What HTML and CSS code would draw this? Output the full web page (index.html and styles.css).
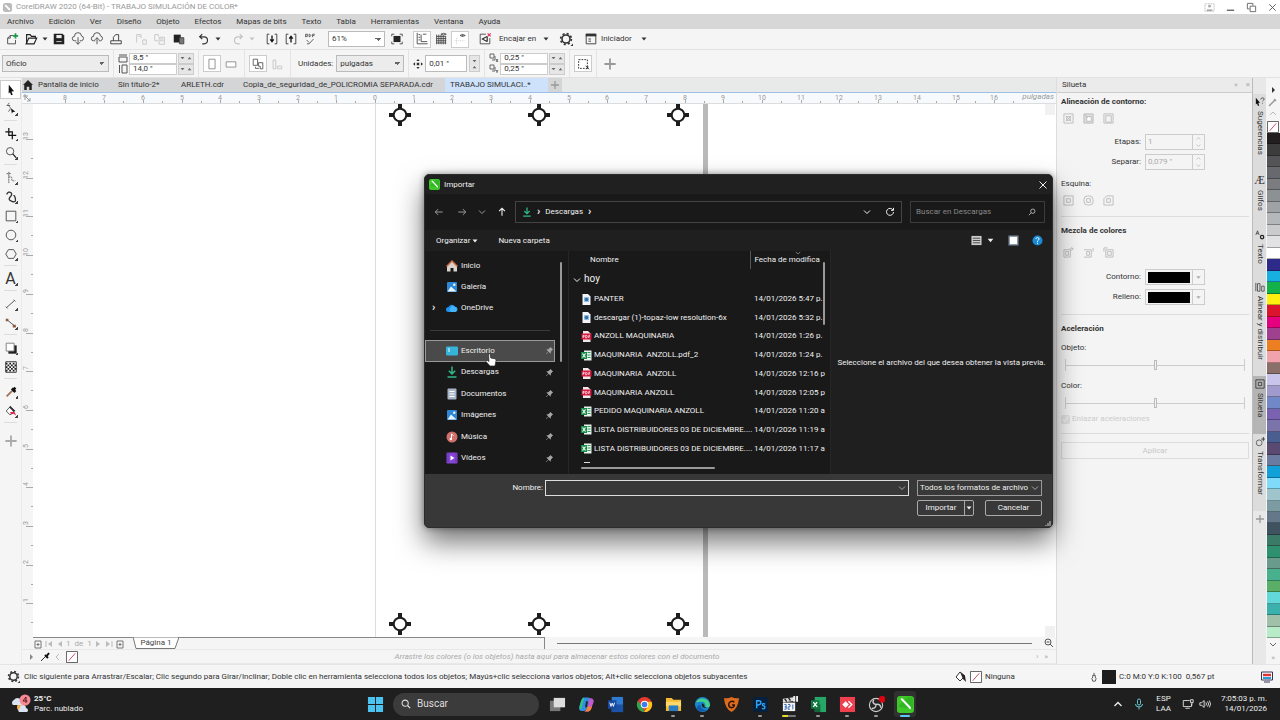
FILE: index.html
```
<!DOCTYPE html>
<html lang="es">
<head>
  <meta charset="UTF-8" />
  <title>CorelDRAW 2020 (64-Bit) - TRABAJO SIMULACIÓN DE COLOR*</title>
  <link rel="stylesheet" href="styles.css">
</head>
<body>
  <!-- shared icons -->
  <svg class="sprite" aria-hidden="true">
    <symbol id="i-caret" viewBox="0 0 8 8"><path d="M1.5 2.5h5L4 5.5z" fill="currentColor"/></symbol>
    <symbol id="i-chev" viewBox="0 0 8 8"><path d="M1 2.5l3 3 3-3" fill="none" stroke="currentColor"/></symbol>
    <symbol id="i-plus" viewBox="0 0 10 10"><path d="M5 1v8M1 5h8" fill="none" stroke="currentColor" stroke-width="1.3"/></symbol>
    <symbol id="i-gear" viewBox="0 0 14 14"><circle cx="7" cy="7" r="4" fill="none" stroke="currentColor" stroke-width="1.6"/><circle cx="7" cy="7" r="5.4" fill="none" stroke="currentColor" stroke-width="1.6" stroke-dasharray="2.1 2.14"/><path d="M14 14v-2.5L11.500 14z" fill="currentColor"/></symbol>
    <symbol id="i-none" viewBox="0 0 13 13"><path d="M.5.5h12v12H.5z" fill="#fff" stroke="#555"/><path d="M3 10.500l7-8" stroke="#c0405a"/></symbol>
    <symbol id="i-pin" viewBox="0 0 10 10"><path d="M6 1l3 3-1 .5L6.500 6.500 6.200 8.500 4 6.300 1.500 9 1 8.500 3.700 6 1.500 3.800l2-.3L5.500 2z" fill="#a5a5a5"/></symbol>
    <symbol id="i-pdf" viewBox="0 0 11 11"><path d="M2 0h5l2.500 2.500V11H2z" fill="#f3e6e8"/><path d="M.5 2.500h10v6H.5z" fill="#d3163c"/><path d="M2 7V4.300h1.200v1.400H2M4.700 7V4.300q1.700 0 1.700 1.300T4.700 7M7.800 7V4.300H9M7.800 5.700h1" fill="none" stroke="#fff" stroke-width=".7"/></symbol>
    <symbol id="i-xls" viewBox="0 0 11 11"><path d="M3 .5h7.500v10H3z" fill="#e8f1ea"/><path d="M6.500 2.500h3M6.500 5h3M6.500 7.500h3" stroke="#2c9c5a" stroke-width="1.200"/><path d="M0 2h6v7H0z" fill="#168a48"/><path d="M1.500 3.500l3 4M4.500 3.500l-3 4" stroke="#fff" stroke-width="1.100"/></symbol>
    <symbol id="i-img" viewBox="0 0 11 11"><path d="M1.500 0H7l2.500 2.500V11h-8z" fill="#f1f4f8"/><path d="M3 3h5v5H3z" fill="#9bc0e4"/><circle cx="5.500" cy="5.500" r="1.800" fill="#2f6faf"/></symbol>
    <symbol id="i-down" viewBox="0 0 12 12"><path d="M6 .5v7M2.800 4.800L6 8l3.200-3.200M1.500 11h9" fill="none" stroke="#2fb885" stroke-width="1.500"/></symbol>
    <symbol id="i-picture" viewBox="0 0 12 12"><rect x="1" y="1" width="10" height="10" rx="1" fill="#2d86d6"/><path d="M1.500 10.500l3.500-5 5.500 5z" fill="#e6f4ff"/><circle cx="8.300" cy="3.700" r="1.200" fill="#fff"/></symbol>
    <symbol id="i-corel" viewBox="0 0 16 16"><rect width="16" height="16" rx="3" fill="#3fc628"/><path d="M1 10L10 1h3a2 2 0 0 1 2 2v9z" fill="#1fa51b" opacity=".5"/><path d="M3.500 3.200l8.500 9 1 .2v-2L5 2.200q-1.500 0-1.500 1z" fill="#fff"/></symbol>
    <symbol id="i-shape" viewBox="0 0 12 12"><path d="M1 1h10v10H1zM4 4h4v4H4z" fill="none" stroke="currentColor"/></symbol>
  </svg>

  <header class="titlebar">
    <svg class="app-logo" viewBox="0 0 12 12"><rect x="1" y="1" width="10" height="10" rx="3" fill="#bbb"/><path d="M3.500 3.500l5 5" stroke="#fff" stroke-width="2"/></svg>
    <span class="app-title">CorelDRAW 2020 (64-Bit) - TRABAJO SIMULACIÓN DE COLOR*</span>
    <div class="window-buttons">
      <button aria-label="Cuenta"><svg viewBox="0 0 12 12"><path d="M1 2h10v8H1z" fill="none" stroke="#bbb" stroke-dasharray="2 1"/><circle cx="6" cy="4.500" r="1.500" fill="#aaa"/><path d="M3 9h6" stroke="#aaa" stroke-width="2"/></svg></button>
      <button aria-label="Minimizar"><svg viewBox="0 0 12 12"><path d="M2 9h8" stroke="#666" stroke-width="1.500"/></svg></button>
      <button aria-label="Restaurar"><svg viewBox="0 0 12 12"><path d="M4.500 4.500h6v6h-6zM4 7.500H1.500v-6h6V4" fill="none" stroke="#666"/></svg></button>
      <button aria-label="Cerrar"><svg viewBox="0 0 12 12"><path d="M2.500 2.500l7 7M9.500 2.500l-7 7" stroke="#555"/></svg></button>
    </div>
  </header>

  <nav class="menubar">
    <button>Archivo</button><button>Edición</button><button>Ver</button><button>Diseño</button><button>Objeto</button><button>Efectos</button><button>Mapas de bits</button><button>Texto</button><button>Tabla</button><button>Herramientas</button><button>Ventana</button><button>Ayuda</button>
  </nav>

  <div class="toolbar">
    <button class="tool" aria-label="Nuevo"><svg viewBox="0 0 16 16"><path d="M9 4H6L3 7v6.500h9V9M6 4v3H3" fill="none" stroke="#444"/><path d="M12 1.500v6M9 4.500h6" stroke="#1c9a4c" stroke-width="2"/></svg></button>
    <button class="tool" aria-label="Abrir"><svg viewBox="0 0 16 16"><path d="M3 13V3h4l1.500 2H13v2" fill="none" stroke="#222" stroke-width="1.300"/><path d="M2.500 13.500L5.500 7h9l-3 6.500z" fill="none" stroke="#222" stroke-width="1.300"/></svg></button>
    <button class="tool-caret" aria-label="Recientes"><svg><use href="#i-caret"/></svg></button>
    <button class="tool" aria-label="Guardar"><svg viewBox="0 0 16 16"><path d="M2 2h10l2 2v10H2z" fill="#222"/><path d="M5 3.500h6v3.500H5z" fill="#eee"/><path d="M5 10.500h6v1H5z" fill="#ddd"/></svg></button>
    <button class="tool" aria-label="Abrir de la nube"><svg viewBox="0 0 16 16"><path d="M6 10H4a2.500 2.500 0 0 1 0-5 4 4 0 0 1 8-.5A2.800 2.800 0 0 1 12 10h-2M8 6v8M5.500 11.500L8 14l2.500-2.500" fill="none" stroke="#444"/></svg></button>
    <button class="tool" aria-label="Guardar en la nube"><svg viewBox="0 0 16 16"><path d="M6 10H4a2.500 2.500 0 0 1 0-5 4 4 0 0 1 8-.5A2.800 2.800 0 0 1 12 10h-2M8 14V6.500M5.500 9L8 6.500 10.500 9" fill="none" stroke="#444"/></svg></button>
    <button class="tool" aria-label="Imprimir"><svg viewBox="0 0 16 16"><path d="M5 10V6l2.500-3H11v7M2 10h12v3.500H2z" fill="none" stroke="#333"/></svg></button>
    <span class="sep"></span>
    <button class="tool dim" aria-label="Cortar"><svg viewBox="0 0 16 16"><path d="M3 12V3h5v4M5 5h2M10 9h4v5h-4z" fill="none" stroke="currentColor"/></svg></button>
    <button class="tool dim" aria-label="Copiar"><svg viewBox="0 0 16 16"><path d="M6 5V3H2v7h4M7 6h6v8H7zM8 8h4M8 10h4" fill="none" stroke="currentColor"/></svg></button>
    <button class="tool" aria-label="Pegar"><svg viewBox="0 0 16 16"><path d="M2 3h8v9H2z" fill="#222"/><path d="M8.500 6.500h5v7h-5z" fill="#777" stroke="#444"/></svg></button>
    <span class="sep"></span>
    <button class="tool" aria-label="Deshacer"><svg viewBox="0 0 16 16"><path d="M6 2.500L3 5.500l3 2.500M3.500 5.500H8a4 4 0 0 1 0 8H6" fill="none" stroke="#333" stroke-width="1.300"/></svg></button>
    <button class="tool-caret" aria-label="Lista deshacer"><svg><use href="#i-caret"/></svg></button>
    <span class="sep"></span>
    <button class="tool dim" aria-label="Rehacer"><svg viewBox="0 0 16 16"><path d="M10 2.500l3 3L10 8M12.500 5.500H8a4 4 0 0 0 0 8h2" fill="none" stroke="currentColor" stroke-width="1.300"/></svg></button>
    <button class="tool-caret dim" aria-label="Lista rehacer"><svg><use href="#i-caret"/></svg></button>
    <span class="sep"></span>
    <button class="tool" aria-label="Importar archivo"><svg viewBox="0 0 16 16"><path d="M5 2.500H2.500v11H5M11 2.500h2.500v11H11" fill="none" stroke="#333"/><path d="M8 4v7M6 8.500L8 11l2-2.500" fill="none" stroke="#111" stroke-width="1.500"/></svg></button>
    <button class="tool" aria-label="Exportar"><svg viewBox="0 0 16 16"><path d="M5 2.500H2.500v11H5M11 2.500h2.500v11H11" fill="none" stroke="#333"/><path d="M8 12V5M6 7.500L8 5l2 2.500" fill="none" stroke="#111" stroke-width="1.500"/></svg></button>
    <button class="tool" aria-label="Publicar en PDF"><svg viewBox="0 0 16 16"><path d="M3 6V2.500h2V5H3M7 2.500v3q2-.5 2-1.500T7 2.500M11 6V2.500h2.500M11 4h2M4 9l3 3M12 8l-5 5.500H4.500" fill="none" stroke="#555"/></svg></button>
    <span class="sep"></span>
    <select class="zoom" aria-label="Nivel de zoom"><option>61%</option></select>
    <button class="tool" aria-label="Pantalla completa"><svg viewBox="0 0 16 16"><path d="M4 4.500h8v7H4z" fill="#222"/><path d="M2 5V2.500h3M11 2.500h3V5M14 11v2.500h-3M5 13.500H2V11" fill="none" stroke="#444"/></svg></button>
    <span class="sep"></span>
    <button class="tool pressed" aria-label="Reglas"><svg viewBox="0 0 16 16"><path d="M2.500 1v12.500h12M7 3v8h7M4 3h2M4 6h2M4 9h2M9 2.500h4" fill="none" stroke="#444"/></svg></button>
    <button class="tool" aria-label="Cuadrícula"><svg viewBox="0 0 16 16"><path d="M3 3v11M5.500 3v11M8 3v11M10.500 4v10M13 5v9M2.500 5H14M2.500 7.500H14M2.500 10H14M2.500 12.500H14" stroke="#444"/><path d="M8 2.500q3-2 6 0-3 2-6 0" fill="#fff" stroke="#444"/></svg></button>
    <button class="tool pressed" aria-label="Guías"><svg viewBox="0 0 16 16"><path d="M2 10h12M4 14V6" stroke="#ccc" stroke-dasharray="1 1"/><path d="M8 4q3-2.500 6 0-3 2-6 0M11 3v2" fill="none" stroke="#444"/></svg></button>
    <span class="sep"></span>
    <button class="tool" aria-label="Sin encaje"><svg viewBox="0 0 16 16"><path d="M9 2.500H2.500v11h11V7" fill="none" stroke="#444"/><path d="M10.500 5v6M10.500 5L5 8l5.500 3" fill="none" stroke="#222" stroke-width="1.300"/><path d="M11 1.500l3.500 3.500M14.500 1.500L11 5" stroke="#d8365a" stroke-width="1.300"/></svg></button>
    <button class="text-tool snap">Encajar en</button>
    <button class="tool-caret" aria-label="Opciones de encaje"><svg><use href="#i-caret"/></svg></button>
    <span class="sep"></span>
    <button class="tool" aria-label="Opciones"><svg><use href="#i-gear"/></svg></button>
    <span class="sep"></span>
    <button class="tool" aria-label="Iniciador de aplicaciones"><svg viewBox="0 0 16 16"><path d="M2.500 2.500h11v11h-11z" fill="none" stroke="#333"/><path d="M2 2h12v3H2z" fill="#333"/><path d="M5 8h3M5 10.500h3" stroke="#333"/></svg></button>
    <button class="text-tool launcher">Iniciador</button>
    <button class="tool-caret" aria-label="Más aplicaciones"><svg><use href="#i-caret"/></svg></button>
  </div>

  <div class="toolbar property-bar">
    <select class="paper" aria-label="Tamaño de página"><option>Oficio</option></select>
    <span class="sep line"></span>
    <div class="pair">
      <label class="field"><svg viewBox="0 0 10 10"><path d="M1 4h8v5H1zM1 2h8" fill="none" stroke="#555"/></svg><input value="8,5 &quot;" aria-label="Ancho"><i class="spin"><svg><use href="#i-caret"/></svg><svg><use href="#i-caret"/></svg></i></label>
      <label class="field"><svg viewBox="0 0 10 10"><path d="M4 1h5v8H4zM1.500 1v8" fill="none" stroke="#555"/></svg><input value="14,0 &quot;" aria-label="Alto"><i class="spin"><svg><use href="#i-caret"/></svg><svg><use href="#i-caret"/></svg></i></label>
    </div>
    <span class="sep line"></span>
    <button class="tool pressed" aria-label="Vertical"><svg viewBox="0 0 16 16"><path d="M4.500 2.500h7v11h-7z" fill="#fff" stroke="#888"/></svg></button>
    <button class="tool" aria-label="Horizontal"><svg viewBox="0 0 16 16"><path d="M2.500 5.500h11v6h-11z" fill="#fff" stroke="#888"/></svg></button>
    <span class="sep line"></span>
    <button class="tool pressed" aria-label="Todas las páginas"><svg viewBox="0 0 16 16"><path d="M2.500 2.500h5v7h-5zM5 11v2h4M8.500 6.500h5v7h-3v-3h-2z" fill="none" stroke="#555"/></svg></button>
    <button class="tool dim" aria-label="Página actual"><svg viewBox="0 0 16 16"><path d="M3.500 3.500h3v10h-3zM8.500 10.500h5v3h-5z" fill="none" stroke="currentColor"/></svg></button>
    <span class="sep line"></span>
    <label class="field units">Unidades: <select><option>pulgadas</option></select></label>
    <span class="sep line"></span>
    <label class="field nudge"><svg viewBox="0 0 12 12"><path d="M6 0l2 2.500H4zM6 12l2-2.500H4zM0 6l2.500-2v4zM12 6L9.500 4v4zM4.500 4.500h3v3h-3z" fill="#333"/></svg><input value="0,01 &quot;" aria-label="Distancia de precisión"><i class="spin tall"><svg><use href="#i-caret"/></svg><svg><use href="#i-caret"/></svg></i></label>
    <span class="sep line"></span>
    <div class="pair">
      <label class="field"><svg viewBox="0 0 10 10"><path d="M1 1h4v4H1zM3 7h3V3M7 6l2 3M9 6L7 9" fill="none" stroke="#666"/></svg><input value="0,25 &quot;" aria-label="Duplicado X"><i class="spin"><svg><use href="#i-caret"/></svg><svg><use href="#i-caret"/></svg></i></label>
      <label class="field"><svg viewBox="0 0 10 10"><path d="M1 1h4v4H1zM3 7h3V3M7 6l1 1.500L9 6M8 7v2" fill="none" stroke="#666"/></svg><input value="0,25 &quot;" aria-label="Duplicado Y"><i class="spin"><svg><use href="#i-caret"/></svg><svg><use href="#i-caret"/></svg></i></label>
    </div>
    <span class="sep line"></span>
    <button class="tool pressed" aria-label="Tratar como relleno"><svg viewBox="0 0 16 16"><path d="M3 3h10v10H3z" fill="none" stroke="#222" stroke-dasharray="2 1.300"/><path d="M11 10l4 4M12 14l2-3" stroke="#222"/></svg></button>
    <span class="sep line"></span>
    <button class="tool dim add" aria-label="Personalizar"><svg><use href="#i-plus"/></svg></button>
  </div>

  <main class="workspace">
    <div class="toolbox">
      <button class="pick active" aria-label="Selección"><svg viewBox="0 0 16 16"><path d="M5.500 2l6 7.500-3 .3 1.500 3.500-1.800.7-1.400-3.500-1.500 1.500z" fill="#111"/></svg></button>
      <button class="flyout" aria-label="Forma"><svg viewBox="0 0 16 16"><path d="M6 1q-3 2 0 4t-1 6" fill="none" stroke="#555"/><path d="M8 7l5 4-3 .5-1 2z" fill="#111"/><path d="M3 4h4" stroke="#555"/></svg></button>
      <hr>
      <button class="flyout" aria-label="Recortar"><svg viewBox="0 0 16 16"><path d="M5.500 1v8.500H14M1.500 5.500h8V14" fill="none" stroke="#111" stroke-width="1.400"/></svg></button>
      <button class="flyout" aria-label="Zoom"><svg viewBox="0 0 16 16"><circle cx="7" cy="6" r="4.200" fill="none" stroke="#444"/><path d="M10 9l4 4.500" stroke="#222" stroke-width="1.500"/></svg></button>
      <hr>
      <button class="flyout" aria-label="Mano alzada"><svg viewBox="0 0 16 16"><path d="M3 3h5M5.500 1v13M5 7q5-1 4 2t4 2" fill="none" stroke="#555" stroke-dasharray="2 .7"/></svg></button>
      <button class="flyout" aria-label="Medios artísticos"><svg viewBox="0 0 16 16"><path d="M3 5q2-4 5-2 2 2-1 5t2 5 4-3-2-3" fill="none" stroke="#333" stroke-width="1.500"/></svg></button>
      <button class="flyout" aria-label="Rectángulo"><svg viewBox="0 0 16 16"><path d="M2.500 2.500h11v11h-11z" fill="none" stroke="#444"/></svg></button>
      <button class="flyout" aria-label="Elipse"><svg viewBox="0 0 16 16"><circle cx="8" cy="8" r="5.500" fill="none" stroke="#444"/></svg></button>
      <button class="flyout" aria-label="Polígono"><svg viewBox="0 0 16 16"><path d="M5 3h6l3 5-3 5H5L2 8z" fill="none" stroke="#444"/></svg></button>
      <hr>
      <button aria-label="Texto" class="letter flyout">A</button>
      <hr>
      <button class="flyout" aria-label="Cota paralela"><svg viewBox="0 0 16 16"><path d="M3 12l9-8M2 11l2 2M11 3l2 2" stroke="#444"/></svg></button>
      <button class="flyout" aria-label="Conector"><svg viewBox="0 0 16 16"><path d="M3 4l10 8" stroke="#444"/><path d="M2 3h3v3H2zM10 10h3.500v3H10z" fill="#8d5b3e"/></svg></button>
      <hr>
      <button class="flyout" aria-label="Sombra"><svg viewBox="0 0 16 16"><path d="M5 5h9.500v9.500H5z" fill="#222"/><path d="M2.500 2.500h9v9h-9z" fill="#fff" stroke="#777"/></svg></button>
      <button aria-label="Transparencia"><svg viewBox="0 0 16 16"><path d="M2 2h12v12H2z" fill="#fff" stroke="#222"/><path d="M2 4h12M2 8h12M2 12h12" stroke="#222" stroke-width="2" stroke-dasharray="2 2"/><path d="M4 6h10M4 10h10" stroke="#222" stroke-width="2" stroke-dasharray="2 2"/></svg></button>
      <hr>
      <button class="flyout" aria-label="Cuentagotas"><svg viewBox="0 0 16 16"><path d="M3 13l6-6" stroke="#a07050" stroke-width="2"/><path d="M9 4l4 4M9.500 7L13 3" stroke="#111" stroke-width="3"/></svg></button>
      <button class="flyout" aria-label="Relleno interactivo"><svg viewBox="0 0 16 16"><path d="M7 3L2.500 8l4.500 4.500 5-5z" fill="#fff" stroke="#444"/><path d="M7 2l6 6-2 1-5-5z" fill="#333"/><path d="M7 9h5l2 4-3-2-3 1z" fill="#d32b4c"/></svg></button>
      <hr>
      <button aria-label="Más herramientas" class="more"><svg><use href="#i-plus"/></svg></button>
    </div>

    <section class="editor">
      <div class="doc-tabs">
        <button class="home" aria-label="Inicio"><svg viewBox="0 0 12 12"><path d="M6 0l6 6h-1.500v6H7.500V8h-3v4H1.500V6H0z" fill="#222"/></svg></button>
        <button class="t-home">Pantalla de inicio</button><button class="t-untitled">Sin título-2*</button><button class="t-arleth">ARLETH.cdr</button><button class="t-copy">Copia_de_seguridad_de_POLICROMIA SEPARADA.cdr</button><button class="t-active">TRABAJO SIMULACI..*</button><button class="t-new" aria-label="Nuevo documento"><svg><use href="#i-plus"/></svg></button>
      </div>
      <div class="ruler-row">
        <div class="ruler-corner"><svg viewBox="0 0 10 10"><path d="M1 3h5M3 1v6M3 3l5 5M8 5v3H5" fill="none" stroke="#999"/></svg></div>
        <svg class="ruler-h" id="rulerH"></svg>
        <span class="ruler-unit">pulgadas</span>
      </div>
      <div class="canvas-row">
        <svg class="ruler-v" id="rulerV"></svg>
        <svg class="canvas" aria-label="Área de dibujo">
          <defs>
            <symbol id="regmark" viewBox="0 0 22 22"><path d="M11 0v22M0 11h22" stroke="#1d1d1d" stroke-width="4"/><circle cx="11" cy="11" r="6.300" fill="#fff" stroke="#1d1d1d" stroke-width="2"/></symbol>
          </defs>
          <path d="M342.500 0v600" stroke="#ddd"/>
          <rect x="670" width="5" height="100%" fill="#bababa"/>
          <use href="#regmark" x="356" y="0" width="22" height="22"/><use href="#regmark" x="495" y="0" width="22" height="22"/><use href="#regmark" x="634" y="0" width="22" height="22"/>
          <use href="#regmark" x="356" y="509" width="22" height="22"/><use href="#regmark" x="495" y="509" width="22" height="22"/><use href="#regmark" x="634" y="509" width="22" height="22"/>
        </svg>
        <div class="v-scroll"></div>
      </div>
      <div class="page-nav">
        <div class="pages">
          <button aria-label="Agregar página"><svg viewBox="0 0 10 10"><path d="M2 2h6v7H2zM5 4v3M3.500 5.500h3" fill="none" stroke="#777"/></svg></button>
          <button aria-label="Primera"><svg viewBox="0 0 10 10"><path d="M2 2v6" stroke="#bbb"/><path d="M8 2v6L4 5z" fill="#bbb"/></svg></button>
          <button aria-label="Anterior"><svg viewBox="0 0 10 10"><path d="M7 2v6L3 5z" fill="#bbb"/></svg></button>
          <span class="page-count">1&nbsp; de &nbsp;1</span>
          <button aria-label="Siguiente"><svg viewBox="0 0 10 10"><path d="M3 2v6l4-3z" fill="#bbb"/></svg></button>
          <button aria-label="Última"><svg viewBox="0 0 10 10"><path d="M8 2v6" stroke="#bbb"/><path d="M2 2v6l4-3z" fill="#bbb"/></svg></button>
          <button aria-label="Agregar al final"><svg viewBox="0 0 10 10"><path d="M2 2h6v7H2zM5 4v3M3.500 5.500h3" fill="none" stroke="#777"/></svg></button>
        </div>
        <div class="page-tab"><svg viewBox="0 0 46 12" preserveAspectRatio="none"><path d="M0 0l3 11.500h39L46 0z" fill="#fff" stroke="#777"/></svg><span>Página 1</span></div>
        <div class="page-fill"></div>
        <div class="h-scroll"></div>
        <svg class="nav-zoom" viewBox="0 0 10 10"><circle cx="4" cy="4" r="3" fill="none" stroke="#555"/><path d="M6 6l3 3M2.500 4h3" stroke="#555"/></svg>
      </div>
      <div class="doc-palette">
        <svg viewBox="0 0 10 10"><path d="M3 2v6l3-3z" fill="#888"/></svg>
        <svg viewBox="0 0 10 10"><path d="M1 9l5-5" stroke="#333"/><path d="M5 3l3 3M6 5l3-4" stroke="#111" stroke-width="2"/></svg>
        <svg viewBox="0 0 10 10"><path d="M6 2L3 5l3 3" fill="none" stroke="#bbb"/></svg>
        <svg class="no-color"><use href="#i-none"/></svg>
        <em>Arrastre los colores (o los objetos) hasta aquí para almacenar estos colores con el documento</em>
        <span class="more-arrows">›&nbsp; &nbsp;»</span>
      </div>
    </section>

    <aside class="docker">
      <div class="docker-head">Silueta <span>»&nbsp; &nbsp; ×</span></div>
      <div class="docker-body">
        <h2>Alineación de contorno:</h2>
        <div class="shape-row"><svg viewBox="0 0 12 12"><path d="M1 1h10v10H1zM3 3l6 6M9 3L3 9M4 4h4v4H4z" fill="none" stroke="currentColor"/></svg><svg viewBox="0 0 12 12"><path d="M1 1h10v10H1z" fill="#ddd" stroke="currentColor"/><path d="M4 4h5v5H4zM2 2l3 3" fill="#fff" stroke="currentColor"/></svg><svg viewBox="0 0 12 12"><path d="M1 1h10v10H1zM3 3h6v7H3z" fill="none" stroke="currentColor"/></svg></div>
        <div class="form first">
          <label for="steps">Etapas:</label><div class="stepper"><input id="steps" value="1" disabled><i><svg><use href="#i-chev"/></svg><svg><use href="#i-chev"/></svg></i></div>
          <label for="offset">Separar:</label><div class="stepper"><input id="offset" value="0,079 &quot;" disabled><i><svg><use href="#i-chev"/></svg><svg><use href="#i-chev"/></svg></i></div>
        </div>
        <p class="corner">Esquina:</p>
        <div class="shape-row"><svg><use href="#i-shape"/></svg><svg viewBox="0 0 12 12"><rect x="1" y="1" width="10" height="10" rx="4" fill="none" stroke="currentColor"/><path d="M4 4h4v4H4z" fill="none" stroke="currentColor"/></svg><svg viewBox="0 0 12 12"><path d="M4 1h7v10H1V4zM4 4h4v4H4z" fill="none" stroke="currentColor"/></svg></div>
        <hr>
        <h2>Mezcla de colores</h2>
        <div class="shape-row mix"><svg viewBox="0 0 12 12"><path d="M1 3h7v8H1zM3 5h3v4H3zM7 2h4M9 0l2 2-2 2" fill="none" stroke="currentColor"/></svg><svg viewBox="0 0 12 12"><path d="M1 3h8v8H1M4 5h3v4H4zM11 1v4" fill="none" stroke="currentColor"/></svg><svg viewBox="0 0 12 12"><path d="M3 3h8v8H3zM5 5h4v4H5zM1 1h4M1 1v4" fill="none" stroke="currentColor"/></svg></div>
        <div class="form">
          <label for="outline">Contorno:</label><button id="outline" class="color"><span></span><i><svg><use href="#i-caret"/></svg></i></button>
          <label for="fill">Relleno:</label><button id="fill" class="color"><span></span><i><svg><use href="#i-caret"/></svg></i></button>
        </div>
        <hr class="after-form">
        <h2>Aceleración</h2>
        <label for="objAccel" class="slider-label">Objeto:</label>
        <input type="range" id="objAccel" disabled>
        <label for="colorAccel" class="slider-label second">Color:</label>
        <input type="range" id="colorAccel" disabled>
        <label class="link-accel"><input type="checkbox" checked disabled>Enlazar aceleraciones</label>
        <hr class="last">
        <button class="apply" disabled>Aplicar</button>
      </div>
    </aside>

    <div class="docker-tabs">
      <button><svg viewBox="0 0 12 12"><path d="M1 1l5 6-2 .3 1 3-1.500.5-1-3L1 9z" fill="#111"/><path d="M7 3q0-2 2-2t2 1.500q0 1-2 2.500M9 7v1" fill="none" stroke="#444"/></svg><span>Sugerencias</span></button>
      <button><b>Æ</b><span>Glifos</span></button>
      <button><svg viewBox="0 0 12 12"><path d="M1 6l2-5 2 5M2 4h2" fill="none" stroke="#444"/><circle cx="8.500" cy="8.500" r="2" fill="none" stroke="#222" stroke-width="1.500"/></svg><span>Texto</span></button>
      <button><svg viewBox="0 0 12 12"><path d="M1 1v10M3 2h3v9H3zM8 5h3v6H8z" fill="none" stroke="#444"/></svg><span>Alinear y distribuir</span></button>
      <button class="current"><svg><use href="#i-shape"/></svg><span>Silueta</span></button>
      <button><svg viewBox="0 0 12 12"><circle cx="5" cy="7" r="3.500" fill="none" stroke="#555"/><path d="M10 0v5M7.500 2.500h5" stroke="#333"/></svg><span>Transformar</span></button>
      <button class="add-docker" aria-label="Agregar ventana"><svg><use href="#i-plus"/></svg></button>
    </div>

    <div class="palette">
      <svg viewBox="0 0 10 10"><path d="M4 2v6l3-3z" fill="#333"/></svg>
      <svg viewBox="0 0 10 10"><path d="M1 9l6-6M6 2l2 2" stroke="#999" stroke-width="1.500"/></svg>
      <svg viewBox="0 0 10 10"><path d="M2 6l3-3 3 3" fill="none" stroke="#bbb"/></svg>
      <svg class="no-color"><use href="#i-none"/></svg>
      <div class="swatches" id="swatches"></div>
      <svg viewBox="0 0 10 10"><path d="M2 3l3 3 3-3" fill="none" stroke="#666"/></svg>
      <span>»</span>
    </div>
  </main>

  <footer class="statusbar">
    <svg class="status-gear"><use href="#i-gear"/></svg>
    <span class="hint">Clic siguiente para Arrastrar/Escalar; Clic segundo para Girar/Inclinar; Doble clic en herramienta selecciona todos los objetos; Mayús+clic selecciona varios objetos; Alt+clic selecciona objetos subyacentes</span>
    <div class="fill-info"><svg viewBox="0 0 12 12"><path d="M5 1L1 6l4 4 5-5z" fill="#fff" stroke="#333"/><path d="M5 1l5 4 1 6-3-3z" fill="#222"/></svg><svg><use href="#i-none"/></svg><span>Ninguna</span></div>
    <div class="outline-info"><svg viewBox="0 0 12 12"><path d="M4.500 4h3v2l1 2-1 3h-3l-1-3 1-2zM6 1v3" fill="none" stroke="#444"/></svg><i></i><span>C:0 M:0 Y:0 K:100&nbsp; 0,567 pt</span></div>
    <svg class="proof" viewBox="0 0 12 12"><path d="M.5 1h11v8H.5zM3 11h6" fill="#fff" stroke="#335"/><path d="M2 4h8" stroke="#d33" stroke-width="2.500"/><path d="M2 7h8" stroke="#2b9bd8" stroke-width="2"/></svg>
  </footer>

  <div class="taskbar">
    <button class="weather">
      <svg viewBox="0 0 20 20"><circle cx="10" cy="13" r="4" fill="#f4b04c"/><path d="M2 11a3 3 0 0 1 1-5 4 4 0 0 1 7 0l1 5zM8 18a2.500 2.500 0 0 1 1-4 3 3 0 0 1 6 0 2.200 2.200 0 0 1 1 4z" fill="#d8e4f2"/><circle cx="14" cy="6" r="5.500" fill="#f58a92"/><path d="M15 9V3l-3 4h4.500" fill="none" stroke="#5b1a22"/></svg>
      <span><strong>25°C</strong><br>Parc. nublado</span>
    </button>
    <div class="apps">
      <button aria-label="Inicio"><svg viewBox="0 0 18 18"><path d="M1 1h7.500v7.500H1zM9.500 1H17v7.500H9.500zM1 9.500h7.500V17H1zM9.500 9.500H17V17H9.500z" fill="#4cc2f1"/></svg></button>
      <label class="search"><svg viewBox="0 0 12 12"><circle cx="5" cy="5" r="3.700" fill="none" stroke="#ddd" stroke-width="1.300"/><path d="M7.800 7.800L11 11" stroke="#ddd" stroke-width="1.500"/></svg><input placeholder="Buscar" aria-label="Buscar"></label>
      <button aria-label="Vista de tareas"><svg viewBox="0 0 18 18"><path d="M1 5h11v11H1z" fill="#777"/><path d="M5 2h12v10H5z" fill="#ddd"/></svg></button>
      <button aria-label="Copilot"><svg viewBox="0 0 18 18"><path d="M6 1.500h5q2 0 1.500 2L10 12q-1 4-4 4H4q-3.500 0-2.500-4L4 4q.5-2.500 2-2.500z" fill="#2f8fe0"/><path d="M5 8l1.500-5q.5-1.500-1-1Q3.800 3 3.200 5L1.500 11q-.5 3 2 3z" fill="#37c28b"/><path d="M12 2.500h2q3 .5 2.500 4L14 13q-1 3.500-4 3.500H7q2-.5 3-4z" fill="#c45ad0"/><path d="M10 11h5l-1 2.500q-1 3-4 3H6.500Q9 15.500 10 11z" fill="#f5813d"/><path d="M8.500 5.500h2L9.500 12h-2z" fill="#20222c"/></svg></button>
      <button aria-label="Word"><svg viewBox="0 0 18 18"><path d="M5 1h12v16H5z" fill="#2f7bd4"/><path d="M5 9h12v8H5z" fill="#1a52a8"/><path d="M1 4.500h9v9H1z" fill="#174a9c"/><path d="M3 7l1.200 4L5.500 7.500 6.800 11 8 7" fill="none" stroke="#fff"/></svg></button>
      <button aria-label="Chrome"><svg viewBox="0 0 18 18"><circle cx="9" cy="9" r="8" fill="#e53c2f"/><path d="M2 5l5 7 2 5A8 8 0 0 1 2 5z" fill="#2da44e"/><path d="M16.500 6H9l3 6-3.500 5A8 8 0 0 0 16.500 6z" fill="#fcc31e"/><circle cx="9" cy="9" r="4" fill="#fff"/><circle cx="9" cy="9" r="3" fill="#3b7ded"/></svg></button>
      <button aria-label="Explorador" class="open"><svg viewBox="0 0 18 18"><path d="M1 2h6l2 2h8v12H1z" fill="#f6ba33"/><path d="M1 6h16v5H1z" fill="#ffd869"/><path d="M4 10h10v6H4z" fill="#2b7cc5"/></svg></button>
      <button aria-label="Edge" class="open"><svg viewBox="0 0 18 18"><circle cx="9" cy="9" r="8" fill="#1786cf"/><path d="M2 7a8 8 0 0 1 15 3q-1 3-5 2 1-6-4-6-4 0-6 1z" fill="#46cf8b"/><path d="M7 9q-1 5 6 6-5 3-9 0-3-4 3-6z" fill="#135aa8"/><path d="M8 8q3 0 3 3l3 2-5-1z" fill="#202020"/></svg></button>
      <button aria-label="Seguridad"><svg viewBox="0 0 18 18"><path d="M9 1q4 2 8 1-1 11-8 15Q2 13 1 2q4 1 8-1z" fill="#de6c20"/><path d="M12 6.500Q10 5 8 6q-2 1-2 3 0 3 3 3.500 3-.5 3-3H9.500" fill="none" stroke="#26140a" stroke-width="1.500"/></svg></button>
      <button aria-label="Photoshop" class="open"><svg viewBox="0 0 18 18"><rect x="1" y="1" width="16" height="16" rx="3" fill="#06213d"/><path d="M5 13V5h2q2.500 0 2.500 2T7 9.500H5M14 8.500q-3-1-3 .5t1.500 1.500 1 2-3 .5" fill="none" stroke="#32a8ff" stroke-width="1.400"/></svg></button>
      <button aria-label="Reproductor" class="busy"><svg viewBox="0 0 18 18"><path d="M2 7h13v9H2z" fill="#f4f4f4"/><path d="M2 3l13-2v4L2 7z" fill="#ddd"/><path d="M4 3l2 3M8 2l2 3" stroke="#222" stroke-width="1.500"/><path d="M3.500 9h2v2.500h-1.500 1.500V14h-2M7.500 9h2v2.500h-2V14h2M12.500 9v5" fill="none" stroke="#3169b8"/><path d="M14 0v6M17 0v6" stroke="#eee" stroke-width="2"/></svg></button>
      <button aria-label="Excel" class="open"><svg viewBox="0 0 18 18"><path d="M5 1h12v16H5z" fill="#26a767"/><path d="M5 9h6v8H5z" fill="#14653c"/><path d="M1 4.500h9v9H1z" fill="#0f7941"/><path d="M3.500 6.500l4 5M7.500 6.500l-4 5" stroke="#fff" stroke-width="1.400"/></svg></button>
      <button aria-label="AnyDesk" class="open"><svg viewBox="0 0 18 18"><path d="M1 1h16v16H1z" fill="#ef4050"/><path d="M7 5.500L10.500 9 7 12.500 3.500 9z" fill="#fff"/><path d="M10 5.500L13.500 9 10 12.500" fill="none" stroke="#fff" stroke-width="1.500"/></svg></button>
      <button aria-label="OBS" class="open"><svg viewBox="0 0 18 18"><circle cx="8.500" cy="9.500" r="7" fill="#242424" stroke="#ccc" stroke-width="1.200"/><path d="M8.500 9Q4 8 6 4M8.500 9q5-1 5 3.500M8.500 9Q8 14 4 13" fill="none" stroke="#ccc" stroke-width="1.500"/><circle cx="15" cy="3.500" r="3.500" fill="#e3000f"/></svg></button>
      <button aria-label="CorelDRAW" class="open current"><svg><use href="#i-corel"/></svg></button>
    </div>
    <div class="tray">
      <svg viewBox="0 0 12 12"><path d="M2.500 8L6 4.500 9.500 8" fill="none" stroke="#eee" stroke-width="1.300"/></svg>
      <svg class="mic" viewBox="0 0 12 12"><rect x="4.500" y="1" width="3" height="6" rx="1.500" fill="none" stroke="#66c8d6"/><path d="M2.500 6q0 3 3.500 3t3.500-3M6 9v2.500" fill="none" stroke="#66c8d6"/></svg>
      <span class="lang">ESP<br>LAA</span>
      <svg viewBox="0 0 14 12"><path d="M9 2H1.500v7H11V6M4 11h5" fill="none" stroke="#eee"/><path d="M10 1h3v3.500h-3zM11.500 4v4" fill="none" stroke="#eee"/></svg>
      <svg viewBox="0 0 14 12"><path d="M1 4.500h2L6 2v8L3 7.500H1zM8 4q1.500 2 0 4M10 3q2.500 3 0 6M12 2q3 4 0 8" fill="none" stroke="#eee"/></svg>
      <span class="clock">7:05:03 p. m.<br>14/01/2026</span>
    </div>
  </div>

  <div class="dialog" role="dialog" aria-label="Importar">
    <div class="dialog-title"><svg><use href="#i-corel"/></svg><span>Importar</span><button aria-label="Cerrar"><svg viewBox="0 0 10 10"><path d="M1.500 1.500l7 7M8.500 1.500l-7 7" stroke="#eee"/></svg></button></div>
    <div class="dialog-nav">
      <button class="arrow dim" aria-label="Atrás"><svg viewBox="0 0 12 12"><path d="M10.500 6h-9M5 2.500L1.500 6 5 9.500" fill="none" stroke="currentColor" stroke-width="1.200"/></svg></button>
      <button class="arrow dim" aria-label="Adelante"><svg viewBox="0 0 12 12"><path d="M1.500 6h9M7 2.500L10.500 6 7 9.500" fill="none" stroke="currentColor" stroke-width="1.200"/></svg></button>
      <button class="arrow small dim" aria-label="Recientes"><svg><use href="#i-chev"/></svg></button>
      <button class="arrow" aria-label="Arriba"><svg viewBox="0 0 12 12"><path d="M6 10.500v-9M2.500 5L6 1.500 9.500 5" fill="none" stroke="currentColor" stroke-width="1.300"/></svg></button>
      <div class="address">
        <svg><use href="#i-down"/></svg><b>›</b><a href="#">Descargas</a><b>›</b>
        <svg class="drop"><use href="#i-chev"/></svg>
        <svg class="reload" viewBox="0 0 12 12"><path d="M9.500 3.500A4.200 4.200 0 1 0 10.200 6M10.200 1v3h-3" fill="none" stroke="#eee" stroke-width="1.200"/></svg>
      </div>
      <label class="find"><input placeholder="Buscar en Descargas" aria-label="Buscar en Descargas"><svg viewBox="0 0 10 10"><circle cx="6" cy="4" r="2.700" fill="none" stroke="#ccc"/><path d="M4 6L1 9" stroke="#ccc"/></svg></label>
    </div>
    <div class="dialog-tools">
      <button>Organizar <svg><use href="#i-caret"/></svg></button>
      <button>Nueva carpeta</button>
      <div class="view-tools">
        <button aria-label="Vista"><svg viewBox="0 0 12 12"><path d="M.5 1h11v10H.5z" fill="#ccc"/><path d="M2 3.500h8M2 6h8M2 8.500h8" stroke="#444"/></svg></button>
        <button aria-label="Más vistas" class="view-drop"><svg><use href="#i-caret"/></svg></button>
        <button aria-label="Panel de vista previa"><svg viewBox="0 0 12 12"><path d="M.5.5h11v11H.5z" fill="#789"/><path d="M2 2h8v8H2z" fill="#fff"/></svg></button>
        <button aria-label="Ayuda"><svg viewBox="0 0 12 12"><circle cx="6" cy="6" r="5.500" fill="#1a8ad6"/><path d="M4.300 4.500q0-1.700 1.700-1.700t1.700 1.500Q7.700 5.500 6 6.500v1M6 8.500v1.200" fill="none" stroke="#fff"/></svg></button>
      </div>
    </div>
    <div class="dialog-body">
      <div class="places">
        <div class="place-group top">
          <a href="#"><i></i><svg viewBox="0 0 12 12"><path d="M6 1l5 5v5.500H7.500V8h-3v3.500H1V6z" fill="#d9d2cc"/><path d="M.5 6.500L6 1l5.500 5.500" fill="none" stroke="#c96b45" stroke-width="1.500"/></svg>Inicio</a>
          <a href="#"><i></i><svg><use href="#i-picture"/></svg>Galería</a>
          <a href="#"><i><b>›</b></i><svg viewBox="0 0 12 12"><path d="M2.500 10a2.500 2.500 0 0 1 0-5A3.700 3.700 0 0 1 9 4.500 2.800 2.800 0 0 1 9.500 10z" fill="#1f8ff0"/><path d="M5 10a3 3 0 0 1 4-5 2.700 2.700 0 0 1 .5 5z" fill="#45b4fa"/></svg>OneDrive</a>
        </div>
        <hr>
        <div class="place-group pinned">
          <a href="#" class="selected"><i></i><svg viewBox="0 0 12 12"><rect y="1.500" width="12" height="9" rx="1" fill="#36b3d8"/><path d="M2 4h2M2 6h2" stroke="#e8ffff"/></svg>Escritorio<svg class="pin"><use href="#i-pin"/></svg></a>
          <a href="#"><i></i><svg><use href="#i-down"/></svg>Descargas<svg class="pin"><use href="#i-pin"/></svg></a>
          <a href="#"><i></i><svg viewBox="0 0 12 12"><rect x="1.500" y=".5" width="9" height="11" rx="1" fill="#a9b4c9"/><path d="M3.500 3.500h5M3.500 6h5M3.500 8.500h5" stroke="#fff"/></svg>Documentos<svg class="pin"><use href="#i-pin"/></svg></a>
          <a href="#"><i></i><svg><use href="#i-picture"/></svg>Imágenes<svg class="pin"><use href="#i-pin"/></svg></a>
          <a href="#"><i></i><svg viewBox="0 0 12 12"><circle cx="6" cy="6" r="5.500" fill="#d0706a"/><path d="M5.500 8V3l2 1.500" fill="none" stroke="#fff"/><circle cx="4.800" cy="8" r="1.200" fill="#fff"/></svg>Música<svg class="pin"><use href="#i-pin"/></svg></a>
          <a href="#"><i></i><svg viewBox="0 0 12 12"><rect x=".5" y=".5" width="11" height="11" rx="1" fill="#8444d6"/><path d="M4.500 3.500v5l4-2.500z" fill="#fff"/><path d="M2 1v10M10 1v10" stroke="#5b2aa0" stroke-dasharray="1.500 1"/></svg>Vídeos<svg class="pin"><use href="#i-pin"/></svg></a>
        </div>
        <span class="thumb-v"></span>
      </div>
      <div class="files">
        <table>
          <thead><tr><th>Nombre</th><th class="date">Fecha de modifica</th></tr></thead>
          <tbody>
            <tr class="group"><td colspan="2"><svg><use href="#i-chev"/></svg>hoy</td></tr>
            <tr><td><svg><use href="#i-img"/></svg>PANTER</td><td>14/01/2026 5:47 p.</td></tr>
            <tr><td><svg><use href="#i-img"/></svg>descargar (1)-topaz-low resolution-6x</td><td>14/01/2026 5:32 p.</td></tr>
            <tr><td><svg><use href="#i-pdf"/></svg>ANZOLL MAQUINARIA</td><td>14/01/2026 1:26 p.</td></tr>
            <tr><td><svg><use href="#i-xls"/></svg>MAQUINARIA&nbsp; ANZOLL.pdf_2</td><td>14/01/2026 1:24 p.</td></tr>
            <tr><td><svg><use href="#i-pdf"/></svg>MAQUINARIA&nbsp; ANZOLL</td><td>14/01/2026 12:16 p</td></tr>
            <tr><td><svg><use href="#i-pdf"/></svg>MAQUINARIA ANZOLL</td><td>14/01/2026 12:05 p</td></tr>
            <tr><td><svg><use href="#i-xls"/></svg>PEDIDO MAQUINARIA ANZOLL</td><td>14/01/2026 11:20 a</td></tr>
            <tr><td><svg><use href="#i-xls"/></svg>LISTA DISTRIBUIDORES 03 DE DICIEMBRE....</td><td>14/01/2026 11:19 a</td></tr>
            <tr><td><svg><use href="#i-xls"/></svg>LISTA DISTRIBUIDORES 03 DE DICIEMBRE....</td><td>14/01/2026 11:17 a</td></tr>
          </tbody>
        </table>
        <span class="next-row"></span>
        <svg class="sort"><use href="#i-chev"/></svg>
        <span class="thumb-v"></span><span class="thumb-h"></span>
      </div>
      <div class="preview">Seleccione el archivo del que desea obtener la vista previa.</div>
    </div>
    <div class="dialog-foot">
      <label for="fileName">Nombre:</label>
      <div class="combo"><input id="fileName"><svg><use href="#i-chev"/></svg></div>
      <div class="combo filter"><select aria-label="Tipo de archivo"><option>Todos los formatos de archivo</option></select><svg><use href="#i-chev"/></svg></div>
      <div class="actions">
        <div class="split"><button>Importar</button><button aria-label="Opciones de importación"><svg><use href="#i-caret"/></svg></button></div>
        <button class="cancel">Cancelar</button>
      </div>
      <svg class="grip" viewBox="0 0 6 6"><path d="M1 6V5M3 6V3M5 6V1" stroke="#ccc"/></svg>
    </div>
    <svg class="pointer" viewBox="0 0 12 14"><path d="M3.500 1q1.500-1 1.800.8l.5 3.200 4.200.8q1.500.5 1 2L10 13H5L1 8.500q0-1.500 1.500-1L4 8.500z" fill="#fff" stroke="#222" stroke-width=".7"/></svg>
  </div>

  <script src="script.js"></script>
</body>
</html>
```

FILE: styles.css
```
* {
  box-sizing: border-box;
}

body {
  margin: 0;
  height: 100vh;
  display: flex;
  flex-direction: column;
  overflow: hidden;
  position: relative;
  background: #f5f5f5;
  color: #333;
  font-family: Roboto, "Open Sans", sans-serif;
  font-size: 8px;
  line-height: 12px;
}

button,
input,
select {
  font: inherit;
  color: inherit;
  margin: 0;
  padding: 0;
  border: 0;
  background: none;
  min-width: 0;
}

button {
  display: flex;
  align-items: center;
  justify-content: center;
  white-space: nowrap;
}

input {
  outline: 0;
}

select {
  appearance: none;
  background-image: linear-gradient(45deg, transparent 50%, #666 50%), linear-gradient(-45deg, transparent 50%, #666 50%);
  background-size: 3px 3px;
  background-position: right 6px center, right 3px center;
  background-repeat: no-repeat;
}

svg {
  display: block;
  flex: none;
  width: 10px;
  height: 10px;
}

hr {
  border: 0;
  border-top: 1px solid #ddd;
  margin: 0;
}

i {
  font-style: normal;
}

.sprite {
  position: absolute;
  width: 0;
  height: 0;
}

.dim {
  color: #c4c4c4;
}

/* top bars */
.titlebar {
  display: flex;
  align-items: center;
  height: 14px;
  padding-left: 2px;
  background: #fff;
  color: #999;
}

.app-logo {
  width: 11px;
  height: 11px;
  margin-right: 3px;
}

.window-buttons {
  display: flex;
  gap: 10px;
  margin-left: auto;
  padding-right: 2px;
}

.window-buttons svg {
  width: 11px;
  height: 11px;
}

.menubar {
  display: flex;
  gap: 15px;
  height: 15px;
  padding-left: 7px;
  background: #d7d7d7;
}

.toolbar {
  display: flex;
  align-items: center;
  gap: 1px;
  height: 21px;
  padding-left: 3px;
  border-bottom: 1px solid #e2e2e2;
}

.tool {
  width: 18px;
  height: 17px;
}

.tool svg {
  width: 14px;
  height: 14px;
}

.tool.pressed {
  background: #fff;
  border: 1px solid #ccc;
}

.tool-caret {
  width: 8px;
}

.tool-caret svg {
  width: 8px;
  height: 8px;
}

.sep {
  width: 5px;
  height: 15px;
}

.sep.line {
  width: 7px;
  height: 27px;
  background: linear-gradient(#e4e4e4, #e4e4e4) center / 1px 100% no-repeat;
}

.zoom {
  width: 57px;
  height: 16px;
  margin: 0 2px;
  padding-left: 3px;
  border: 1px solid #bbb;
  background-color: #fff;
}

.text-tool {
  margin-left: 4px;
}

.snap {
  width: 42px;
  justify-content: flex-start;
}

.launcher {
  width: 38px;
  margin-left: 0;
  justify-content: flex-start;
}

.property-bar {
  height: 28px;
  padding-left: 2px;
}

.paper,
.units select {
  width: 107px;
  height: 17px;
  padding-left: 3px;
  border: 1px solid #bbb;
  background-color: #ececec;
}

.field {
  display: flex;
  align-items: center;
}

.field input {
  width: 48px;
  padding-left: 3px;
  background: #fff;
}

.pair .field {
  height: 11px;
  gap: 1px;
}

.pair .field input {
  height: 11px;
  border: 1px solid #ccc;
}

.spin {
  display: flex;
  width: 16px;
  height: 11px;
  background: #e6e6e6;
  color: #666;
  align-items: center;
  border: 1px solid #ccc;
}

.spin svg {
  width: 7px;
  height: 6px;
}

.spin svg:last-child,
.stepper svg:first-child {
  transform: rotate(180deg);
}

.spin.tall {
  flex-direction: column;
  justify-content: center;
  width: 11px;
  height: 17px;
}

.units {
  gap: 3px;
  margin-left: 3px;
}

.units select {
  width: 68px;
}

.nudge {
  gap: 2px;
}

.nudge input {
  width: 42px;
  height: 17px;
  border: 1px solid #bbb;
}

.add {
  color: #999;
}

/* workspace */
.workspace {
  flex: 1;
  display: flex;
  min-height: 0;
}

.toolbox {
  width: 22px;
  padding-top: 2px;
  border-right: 1px solid #ebebeb;
}

.toolbox button {
  width: 21px;
  height: 19px;
}

.toolbox button svg {
  width: 14px;
  height: 14px;
}

/* small corner mark on tools with a flyout */
.flyout {
  background: linear-gradient(135deg, transparent 50%, #444 50%) right 3px bottom 2px / 3px 3px no-repeat;
}

.toolbox hr {
  margin: 2px 4px 3px;
}

.toolbox .active {
  background: #fff;
  border: 1px solid #ccc;
}

.toolbox .letter {
  font-size: 16px;
  color: #333;
}

.toolbox .more {
  height: 30px;
  color: #aaa;
}

.editor {
  flex: 1;
  min-width: 0;
  display: flex;
  flex-direction: column;
}

.doc-tabs {
  display: flex;
  height: 14px;
  background: #e8e9e9;
}

.doc-tabs button {
  justify-content: flex-start;
  background: #d4d5d6;
}

.doc-tabs .home {
  padding-left: 1px;
  width: 16px;
}

.t-home {
  width: 80px;
}

.t-untitled {
  width: 63px;
}

.t-arleth {
  width: 62px;
}

.t-copy {
  width: 202px;
}

.doc-tabs .t-active {
  width: 103px;
  padding-left: 5px;
  background: #cfe2fb;
}

.doc-tabs .t-new {
  width: 14px;
  justify-content: center;
  color: #999;
}

.ruler-row {
  display: flex;
  height: 12px;
  border-top: 1px solid #9fc0e4;
  border-bottom: 1px solid #ddd;
  background: #f6fafc;
  position: relative;
}

.ruler-corner {
  width: 11px;
}

.ruler-h {
  flex: 1;
  height: 10px;
}

.ruler-unit {
  position: absolute;
  right: 2px;
  top: -2px;
  color: #999;
  font-style: italic;
}

.canvas-row {
  flex: 1;
  display: flex;
  min-height: 0;
  position: relative;
}

.ruler-v {
  width: 11px;
  height: 100%;
  background: #f5f5f5;
}

.ruler-h text,
.ruler-v text {
  fill: #999;
  font-size: 7px;
  text-anchor: middle;
}

.ruler-h path,
.ruler-v path {
  stroke: #aaa;
}

.canvas {
  flex: 1;
  height: 100%;
  background: #fff;
}

.v-scroll {
  position: absolute;
  right: 1px;
  top: 0;
  bottom: 0;
  width: 10px;
  background: linear-gradient(#f1f1f1 11px, transparent 11px calc(100% - 11px), #f1f1f1 calc(100% - 11px));
}

.page-nav {
  display: flex;
  align-items: center;
  height: 12px;
  color: #aaa;
}

.pages {
  display: flex;
  align-items: center;
  gap: 1px;
  width: 100px;
  height: 12px;
  margin-left: 11px;
  border-top: 1px solid #888;
}

.page-tab {
  position: relative;
  width: 46px;
  height: 12px;
  color: #444;
  text-align: center;
}

.page-tab svg {
  position: absolute;
  inset: 0;
  width: 100%;
  height: 100%;
}

.page-tab span {
  position: relative;
}

.page-fill {
  flex: 366;
  height: 12px;
  border-top: 1px solid #888;
  border-right: 1px solid #888;
}

.h-scroll {
  flex: 477;
  margin: 0 12px;
  border-top: 1px solid #777;
}

.nav-zoom {
  margin-right: 2px;
}

.doc-palette {
  display: flex;
  align-items: center;
  gap: 3px;
  height: 15px;
  padding: 0 8px 0 5px;
  border-top: 1px solid #e8e8e8;
  border-bottom: 1px solid #e8e8e8;
  color: #aaa;
}

.doc-palette em {
  flex: 1;
  text-align: center;
}

.no-color {
  width: 12px;
  height: 12px;
}

/* docker */
.docker {
  width: 196px;
  border-left: 1px solid #ddd;
  background: #f4f4f4;
}

.docker-head {
  display: flex;
  justify-content: space-between;
  align-items: center;
  height: 15px;
  padding: 0 2px 0 5px;
  background: #ebebeb;
  border-bottom: 1px solid #ccc;
}

.docker-head span {
  color: #aaa;
}

.docker-body {
  padding: 3px 3px 0 4px;
}

.docker h2 {
  margin: 0;
  font-size: 8px;
  line-height: 12px;
}

.shape-row {
  display: flex;
  gap: 9px;
  padding: 5px 2px 3px;
  color: #bbb;
}

.shape-row svg {
  width: 11px;
  height: 11px;
}

.shape-row.mix {
  padding: 10px 2px 11px;
}

.form {
  display: grid;
  grid-template-columns: 80px 60px;
  column-gap: 4px;
  row-gap: 4px;
  align-items: center;
}

.form.first {
  padding: 7px 0 8px;
}

.form label {
  text-align: right;
}

.stepper,
.color {
  display: flex;
  width: 60px;
  height: 16px;
  border: 1px solid #ccc;
  color: #aaa;
}

.stepper input {
  flex: 1;
  padding-left: 2px;
}

.stepper i,
.color i {
  width: 12px;
  height: 100%;
  border-left: 1px solid #ccc;
  display: flex;
  flex-direction: column;
  align-items: center;
  justify-content: space-evenly;
}

.stepper svg {
  width: 5px;
  height: 5px;
}

.color i svg {
  width: 7px;
  height: 7px;
}

.color span {
  flex: 1;
  height: 11px;
  margin: 0 2px;
  background: #000;
}

.corner {
  margin: 0;
}

.docker-body hr {
  margin: 7px 0 8px;
}

.docker-body hr.after-form {
  margin-top: 9px;
}

.slider-label {
  display: block;
  margin-top: 7px;
}

.slider-label.second {
  margin-top: 9px;
}

input[type="range"] {
  appearance: none;
  display: block;
  width: calc(100% - 8px);
  height: 12px;
  margin: 5px 4px 0;
  background: linear-gradient(#ccc, #ccc) center / 100% 1px no-repeat;
  border: solid #ccc;
  border-width: 0 1px;
}

input[type="range"]::-webkit-slider-thumb {
  appearance: none;
  width: 3px;
  height: 10px;
  background: #f4f4f4;
  border: 1px solid #bbb;
}

.link-accel {
  display: flex;
  align-items: center;
  gap: 2px;
  margin-top: 4px;
  color: #ccc;
}

.link-accel input {
  width: 9px;
  height: 9px;
  opacity: 0.5;
}

.docker-body hr.last {
  margin: 8px 0;
}

.apply {
  width: 100%;
  height: 17px;
  border: 1px solid #ddd;
  color: #c8c8c8;
}

.docker-tabs {
  width: 14px;
  padding-top: 16px;
  background: #e8e8e8;
  border-left: 1px solid #bbb;
}

.docker-tabs button {
  flex-direction: column;
  justify-content: flex-start;
  gap: 4px;
  width: 13px;
  padding: 3px 0 16px;
  background: #dcdcdc;
}

.docker-tabs b {
  font: 12px/12px "Liberation Serif", serif;
}

.docker-tabs span {
  writing-mode: vertical-rl;
  line-height: 12px;
}

.docker-tabs .current {
  background: #b5b5b5;
}

.docker-tabs .add-docker {
  background: none;
  color: #999;
}

.palette {
  width: 14px;
  display: flex;
  flex-direction: column;
  align-items: center;
  gap: 2px;
  padding-top: 7px;
  color: #aaa;
}

.palette .no-color {
  margin-bottom: -2px;
}

.swatches {
  flex: 1;
  width: 13px;
  display: flex;
  flex-direction: column;
  margin-left: 1px;
}

.swatches button {
  flex: 1;
  border-bottom: 1px solid rgba(0, 0, 0, 0.3);
}

/* status bar */
.statusbar {
  display: flex;
  align-items: center;
  height: 24px;
  padding: 0 7px;
  border-top: 1px solid #e4e4e4;
}

.status-gear {
  width: 13px;
  height: 13px;
  margin-right: 4px;
}

.fill-info,
.outline-info {
  display: flex;
  align-items: center;
  gap: 3px;
}

.fill-info {
  margin-left: auto;
  width: 134px;
}

.fill-info svg {
  width: 12px;
  height: 12px;
}

.outline-info {
  width: 172px;
}

.outline-info i {
  width: 14px;
  height: 14px;
  background: #1d1d1d;
}

.proof {
  width: 12px;
  height: 12px;
}

/* windows taskbar */
.taskbar {
  display: grid;
  grid-template-columns: 1fr auto 1fr;
  align-items: center;
  height: 32px;
  background: #1f1f1f;
  color: #eee;
}

.weather {
  justify-self: start;
  gap: 3px;
  padding-left: 11px;
  line-height: 10px;
  text-align: left;
}

.weather svg {
  width: 20px;
  height: 20px;
}

.apps {
  display: flex;
  align-items: center;
  gap: 7px;
}

.apps button {
  width: 22px;
  height: 26px;
  position: relative;
}

.apps button svg {
  width: 17px;
  height: 17px;
}

.apps .open::after,
.apps .busy::after {
  content: "";
  position: absolute;
  bottom: 0;
  width: 4px;
  height: 2px;
  border-radius: 1px;
  background: #999;
}

.apps .busy::after {
  width: 14px;
  background: linear-gradient(90deg, #e8d92c 40%, #777 40%);
}

.apps .current {
  background: #303030;
  border-radius: 3px;
}

.apps .current::after {
  width: 10px;
  background: #5cc8f5;
}

.search {
  display: flex;
  align-items: center;
  gap: 6px;
  width: 146px;
  height: 23px;
  padding-left: 8px;
  border-radius: 12px;
  background: #3b3b3b;
  font-size: 10px;
}

.search input {
  flex: 1;
}

.search input::placeholder {
  color: #ddd;
}

.tray {
  display: flex;
  align-items: center;
  justify-self: end;
  gap: 5px;
  padding-right: 13px;
  line-height: 10px;
}

.tray svg {
  width: 12px;
  height: 12px;
}

.mic {
  margin: 0 6px 0 4px;
}

.lang {
  text-align: center;
  margin-right: 6px;
}

.clock {
  text-align: right;
  margin-left: 5px;
}

/* import dialog */
.dialog {
  position: absolute;
  left: 424px;
  top: 174px;
  width: 629px;
  border: 1px solid #2c2c2c;
  border-radius: 5px;
  background: #191919;
  color: #f0f0f0;
  box-shadow: 0 14px 28px rgba(0, 0, 0, 0.55), 0 0 6px rgba(0, 0, 0, 0.4);
}

.dialog-title {
  display: flex;
  align-items: center;
  gap: 4px;
  height: 19px;
  padding: 0 4px;
  background: #202020;
  border-radius: 4px 4px 0 0;
}

.dialog-title > svg {
  width: 11px;
  height: 11px;
}

.dialog-title button {
  margin-left: auto;
}

.dialog-nav {
  display: flex;
  align-items: center;
  height: 36px;
  padding: 0 7px 0 2px;
}

.arrow {
  width: 23px;
  height: 20px;
}

.arrow.dim {
  color: #999;
}

.arrow svg {
  width: 10px;
  height: 10px;
}

.arrow.small {
  width: 17px;
}

.arrow.small svg,
.drop {
  width: 8px;
  height: 8px;
}

.address {
  flex: 1;
  display: flex;
  align-items: center;
  gap: 5px;
  height: 22px;
  margin-left: 2px;
  padding: 0 6px;
  border: 1px solid #444;
}

.address a {
  color: inherit;
  text-decoration: none;
}

.dialog b {
  font-size: 11px;
}

.drop {
  margin-left: auto;
  margin-right: 9px;
}

.find {
  display: flex;
  align-items: center;
  width: 135px;
  height: 22px;
  margin-left: 8px;
  padding: 0 8px 0 5px;
  border: 1px solid #3c3c3c;
}

.find input {
  flex: 1;
}

.find input::placeholder {
  color: #888;
}

.find svg {
  width: 8px;
  height: 8px;
}

.dialog-tools {
  display: flex;
  align-items: center;
  gap: 19px;
  height: 21px;
  padding: 0 9px 0 11px;
  background: #1f1f1f;
}

.dialog-tools button svg {
  width: 8px;
  height: 8px;
  margin-left: 1px;
}

.view-tools {
  display: flex;
  gap: 12px;
  margin-left: auto;
}

.dialog-tools .view-tools svg {
  width: 11px;
  height: 11px;
}

.dialog-tools .view-tools .view-drop {
  margin-left: -9px;
}

.dialog-tools .view-drop svg {
  width: 9px;
  height: 9px;
}

.dialog-body {
  display: flex;
  height: 223px;
}

.places,
.files {
  position: relative;
}

.places {
  display: flex;
  flex-direction: column;
  width: 144px;
  padding: 4px 13px 5px 0;
  border-right: 1px solid #262626;
}

.places hr {
  margin: 11px 5px 9px;
  border-color: #3a3a3a;
}

.place-group {
  display: grid;
  grid-auto-rows: 1fr;
}

.place-group.top {
  height: 64px;
}

.place-group.pinned {
  flex: 1;
}

.places a {
  display: flex;
  align-items: center;
  gap: 3px;
  color: inherit;
  text-decoration: none;
}

.places a i {
  width: 18px;
  padding-left: 7px;
}

.places a svg {
  width: 12px;
  height: 12px;
}

.places a .pin {
  width: 9px;
  height: 9px;
  margin-left: auto;
  margin-right: 1px;
}

.places .selected {
  background: #4a4a4a;
  outline: 1px solid #999;
  outline-offset: -1px;
}

.thumb-v,
.thumb-h {
  position: absolute;
  border-radius: 1px;
  background: #999;
}

.thumb-v {
  top: 11px;
  right: 6px;
  width: 2px;
  height: 100px;
}

.files {
  width: 262px;
  border-right: 1px solid #262626;
}

.files .thumb-v {
  right: 5px;
  height: 63px;
}

.thumb-h {
  left: 12px;
  bottom: 5px;
  width: 134px;
  height: 2px;
}

/* top edge of the next, scrolled out row */
.next-row {
  position: absolute;
  left: 15px;
  bottom: 11px;
  width: 6px;
  height: 1px;
  background: #ddd;
}

.sort {
  position: absolute;
  top: -1px;
  right: 29px;
  width: 6px;
  height: 6px;
  color: #999;
}

.files table {
  width: 252px;
  height: 207px;
  table-layout: fixed;
  border-collapse: collapse;
}

.files th,
.files td {
  height: 18px;
  padding: 0 0 0 4px;
  white-space: nowrap;
  text-align: left;
  font-weight: 400;
}

.files td:first-child {
  padding-left: 12px;
}

.files th:first-child {
  padding-left: 21px;
}

.files .date {
  width: 71px;
  border-left: 1px solid #555;
}

.files td svg {
  display: inline-block;
  width: 11px;
  height: 11px;
  margin-right: 2px;
  vertical-align: middle;
}

.files .group td {
  height: 20px;
  padding-left: 4px;
  font-size: 10px;
}

.files .group svg {
  width: 8px;
  height: 8px;
  margin-right: 3px;
}

.preview {
  flex: 1;
  display: flex;
  align-items: center;
  justify-content: center;
  background: #1f1f1f;
  white-space: nowrap;
}

.dialog-foot {
  position: relative;
  display: grid;
  grid-template-columns: 118px 1fr 125px;
  gap: 4px 0;
  align-items: center;
  padding: 6px 10px 11px 0;
  background: #383838;
  border-radius: 0 0 4px 4px;
}

.dialog-foot label {
  text-align: right;
}

.combo {
  display: flex;
  align-items: center;
  height: 16px;
  margin: 0 8px 0 2px;
  padding-right: 2px;
  border: 1px solid #ddd;
}

.combo input,
.combo select {
  flex: 1;
}

.combo.filter {
  margin: 0;
  padding-left: 2px;
  border-color: #999;
}

.combo select {
  background: none;
}

.combo svg {
  width: 8px;
  height: 8px;
  color: #aaa;
}

.actions {
  grid-column: 3;
  display: flex;
  justify-content: space-between;
}

.split,
.cancel {
  width: 57px;
  height: 16px;
  border: 1px solid #aaa;
  border-radius: 2px;
}

.split {
  display: flex;
}

.split button:first-child {
  flex: 1;
  border-right: 1px solid #aaa;
}

.split svg {
  width: 8px;
  height: 8px;
}

.grip {
  position: absolute;
  right: 1px;
  bottom: 1px;
  width: 6px;
  height: 6px;
}

.pointer {
  position: absolute;
  left: 60px;
  top: 178px;
  width: 12px;
  height: 14px;
}
```

FILE: script.js
```
const SVG_NS = 'http://www.w3.org/2000/svg';
const INCH = 38.7; // pixels per inch at the current zoom

const colors = [
  '#231f20', '#3c3c3c', '#545456', '#68696e', '#7b7c80', '#8c9193', '#9fa3a5', '#b5b8ba', '#c9cbcd', '#e2e2e4',
  '#ffffff', '#2e2a8a', '#19aee0', '#14b04a', '#ffef10', '#d9142c', '#e4007e', '#a0418f', '#ec7f22', '#f0a3ad',
  '#8a7068', '#c8c4ea', '#a09bcc', '#7088c8', '#7a62b0', '#7a74ab', '#4a5f90', '#5a4a72', '#6a7aa0', '#12a0d8',
  '#80dbfa', '#a0c4cc', '#7c9ba3', '#65788a', '#3f5260', '#3c7a68', '#2f9070', '#6a9a8c', '#48b08c', '#5aae68',
  '#62d8d8', '#3cb0ac', '#a0c0aa', '#b8ecc8'
];

function add(parent, name, attrs, text) {
  const el = document.createElementNS(SVG_NS, name);
  for (const key in attrs) el.setAttribute(key, attrs[key]);
  if (text !== undefined) el.textContent = text;
  parent.appendChild(el);
}

function drawRulers() {
  const h = document.getElementById('rulerH');
  for (let n = -8; n <= 16; n++) {
    const x = Math.round(342 + n * INCH);
    add(h, 'text', { x: x, y: 7 }, Math.abs(n));
    add(h, 'path', { d: `M${x + 0.5} 7v3M${x + 19.5} 8v2` });
  }

  const v = document.getElementById('rulerV');
  for (let n = 13; n >= 1; n--) {
    const y = Math.round(35 + (13 - n) * INCH);
    add(v, 'text', { x: 0, y: 0, transform: `translate(6 ${y - 3}) rotate(-90)` }, n);
    add(v, 'path', { d: `M4 ${y + 0.5}h7M9 ${y + 19.5}h2` });
  }
}

function drawSwatches() {
  const box = document.getElementById('swatches');
  colors.forEach(color => {
    const swatch = document.createElement('button');
    swatch.style.background = color;
    swatch.setAttribute('aria-label', color);
    box.appendChild(swatch);
  });
}

drawRulers();
drawSwatches();
```
